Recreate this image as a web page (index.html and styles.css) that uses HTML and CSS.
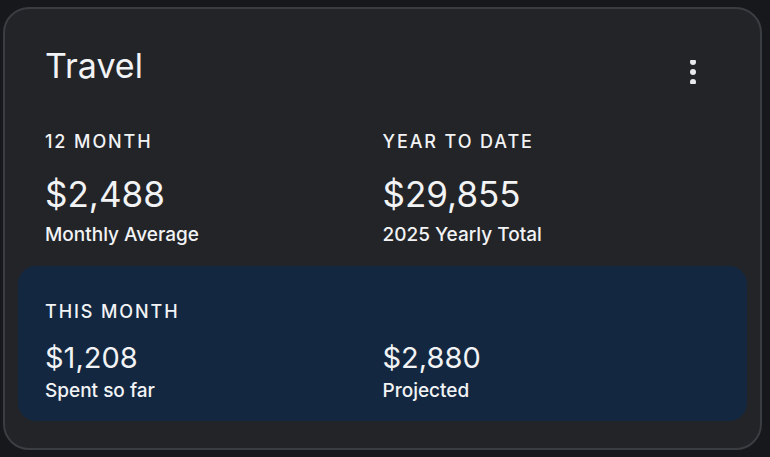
FILE: index.html
```html
<!DOCTYPE html>
<html lang="en">
<head>
<meta charset="utf-8">
<title>Travel</title>
<link rel="stylesheet" href="styles.css">
</head>
<body>
<div class="card">
  <div class="card-header">
    <h1 class="title">Travel</h1>
    <svg class="menu" width="24" height="24" viewBox="0 0 24 24" aria-hidden="true">
      <circle cx="12" cy="2" r="3"/>
      <circle cx="12" cy="12" r="3"/>
      <circle cx="12" cy="22" r="3"/>
    </svg>
  </div>
  <div class="stats">
    <div class="stat">
      <div class="label">12 MONTH</div>
      <div class="value">$2,488</div>
      <div class="sub">Monthly Average</div>
    </div>
    <div class="stat">
      <div class="label">YEAR TO DATE</div>
      <div class="value">$29,855</div>
      <div class="sub">2025 Yearly Total</div>
    </div>
  </div>
  <div class="month">
    <div class="label">THIS MONTH</div>
    <div class="stats month-stats">
      <div class="stat">
        <div class="value small">$1,208</div>
        <div class="sub tight">Spent so far</div>
      </div>
      <div class="stat">
        <div class="value small">$2,880</div>
        <div class="sub tight">Projected</div>
      </div>
    </div>
  </div>
</div>
</body>
</html>
```

FILE: styles.css
```css
* { box-sizing: border-box; }
html, body { height: 100%; }
body {
  margin: 0;
  padding: 7px 8px 7px 3px;
  background: #16181b;
  font-family: Inter, "Noto Sans", sans-serif;
  color: #f2f3f5;
}
.card {
  background: #222428;
  border: 2px solid #3a3d42;
  border-radius: 26px;
  padding: 35px 40px 27px 40px;
}
.card-header {
  display: flex;
  justify-content: space-between;
  align-items: flex-start;
}
.title {
  margin: 0;
  font-size: 34px;
  line-height: 44px;
  font-weight: 400;
}
.menu {
  fill: #e8e9eb;
  margin-top: 16px;
  margin-right: 15px;
}
.stats {
  display: grid;
  grid-template-columns: 1fr 1fr;
  margin-top: 42px;
}
.label {
  font-size: 18px;
  line-height: 24px;
  letter-spacing: 1.9px;
  font-weight: 500;
}
.value {
  margin-top: 18px;
  font-size: 35px;
  line-height: 44px;
}
.sub {
  margin-top: 7px;
  font-size: 19px;
  line-height: 24px;
  font-weight: 500;
}
.month {
  margin: 19px -27px 0;
  padding: 34px 27px 18px;
  background: #132840;
  border-radius: 18px;
}
.month-stats { margin-top: 0; }
.value.small {
  margin-top: 16px;
  font-size: 29px;
  line-height: 36px;
}
.sub.tight { margin-top: 3px; }
```
